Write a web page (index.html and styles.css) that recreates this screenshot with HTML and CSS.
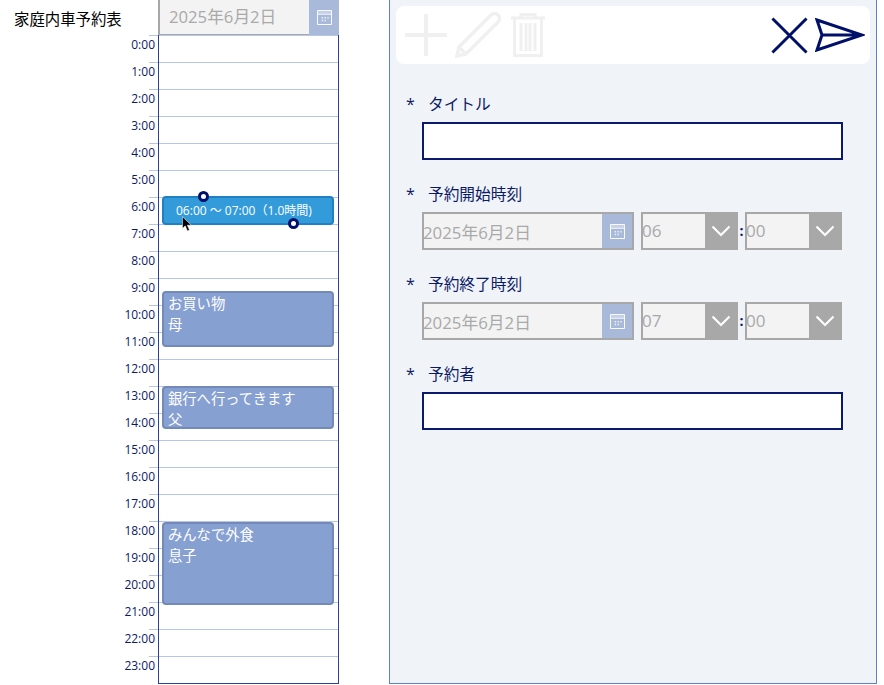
FILE: index.html
```html
<!DOCTYPE html>
<html lang="ja">
<head>
<meta charset="utf-8">
<title>家庭内車予約表</title>
<link rel="stylesheet" href="styles.css">
</head>
<body>
<div class="app">
  <section class="schedule">
    <header class="schedule-head">
      <h1 class="app-title">家庭内車予約表</h1>
      <div class="date-picker date-picker-top">
        <span class="date-text">2025年6月2日</span>
        <span class="cal-btn"><svg class="cal-icon" viewBox="0 0 16 16"><path fill="none" stroke="#fff" d="M.5.5h15v15H.5zM.5 4.500h15"/><path fill="#fff" d="M1 1h14v3H1z" opacity=".35"/><path fill="#fff" d="M5 7.500h1.500V9H5zM8 7.500h1.500V9H8zM11 7.500h1.500V9H11zM5 10.500h1.500V12H5zM8 10.500h1.500V12H8z" opacity=".8"/></svg></span>
      </div>
    </header>
    <div class="timeline">
      <div class="hour"><span class="time">0:00</span></div>
      <div class="hour"><span class="time">1:00</span></div>
      <div class="hour"><span class="time">2:00</span></div>
      <div class="hour"><span class="time">3:00</span></div>
      <div class="hour"><span class="time">4:00</span></div>
      <div class="hour"><span class="time">5:00</span></div>
      <div class="hour"><span class="time">6:00</span></div>
      <div class="hour"><span class="time">7:00</span></div>
      <div class="hour"><span class="time">8:00</span></div>
      <div class="hour"><span class="time">9:00</span></div>
      <div class="hour"><span class="time">10:00</span></div>
      <div class="hour"><span class="time">11:00</span></div>
      <div class="hour"><span class="time">12:00</span></div>
      <div class="hour"><span class="time">13:00</span></div>
      <div class="hour"><span class="time">14:00</span></div>
      <div class="hour"><span class="time">15:00</span></div>
      <div class="hour"><span class="time">16:00</span></div>
      <div class="hour"><span class="time">17:00</span></div>
      <div class="hour"><span class="time">18:00</span></div>
      <div class="hour"><span class="time">19:00</span></div>
      <div class="hour"><span class="time">20:00</span></div>
      <div class="hour"><span class="time">21:00</span></div>
      <div class="hour"><span class="time">22:00</span></div>
      <div class="hour"><span class="time">23:00</span></div>
      <div class="plot">
        <div class="event event-selected">06:00 ～ 07:00（1.0時間)
          <span class="handle handle-top"></span>
          <span class="handle handle-bottom"></span>
        </div>
        <div class="event event-shop"><span>お買い物</span><span>母</span></div>
        <div class="event event-bank"><span>銀行へ行ってきます</span><span>父</span></div>
        <div class="event event-dinner"><span>みんなで外食</span><span>息子</span></div>
        <svg class="cursor" viewBox="0 0 12 17"><path d="M.5.5v13l3-3 2.400 5.500 2.300-1-2.400-5.200h4.400z" fill="#000" stroke="#fff" stroke-width=".6"/></svg>
      </div>
    </div>
  </section>

  <section class="panel">
    <div class="toolbar">
      <div class="tool-group">
        <svg class="tool" viewBox="0 0 44 44"><path d="M22 1v42M1 22h42" fill="none" stroke="#f0f0f0" stroke-width="4"/></svg>
        <svg class="tool tool-pencil" viewBox="0 0 46 46"><path d="M2 44l2-9L36 3c2-2 5-2 7 0s2 5 0 7L11 42zM4 35l7 7" fill="none" stroke="#f0f0f0" stroke-width="3.500"/></svg>
        <svg class="tool tool-trash" viewBox="0 0 34 44"><path d="M0 5h34M10 5V1.500h14V5M3.500 5v37.500h27V5M10 10v28M15 10v28M19 10v28M24 10v28" fill="none" stroke="#f0f0f0" stroke-width="3"/></svg>
      </div>
      <div class="tool-group tool-group-right">
        <svg class="action-x" viewBox="0 0 38 38"><path d="M1.500 1.500l35 35M36.500 1.500l-35 35" fill="none" stroke="#00106a" stroke-width="3"/></svg>
        <svg class="action-send" viewBox="0 0 50 34"><path d="M2 2l45 15-45 15 5-15zM7 17h40" fill="none" stroke="#00106a" stroke-width="3"/></svg>
      </div>
    </div>

    <form class="form">
      <div class="field">
        <div class="field-label"><span class="req">*</span><span>タイトル</span></div>
        <div class="text-input"></div>
      </div>
      <div class="field">
        <div class="field-label"><span class="req">*</span><span>予約開始時刻</span></div>
        <div class="dt-row">
          <div class="date-picker date-picker-form">
            <span class="date-text">2025年6月2日</span>
            <span class="cal-btn"><svg class="cal-icon" viewBox="0 0 16 16"><path fill="none" stroke="#fff" d="M.5.5h15v15H.5zM.5 4.500h15"/><path fill="#fff" d="M1 1h14v3H1z" opacity=".35"/><path fill="#fff" d="M5 7.500h1.500V9H5zM8 7.500h1.500V9H8zM11 7.500h1.500V9H11zM5 10.500h1.500V12H5zM8 10.500h1.500V12H8z" opacity=".8"/></svg></span>
          </div>
          <div class="select"><span class="select-val">06</span><span class="select-btn"><svg class="chev" viewBox="0 0 20 12"><path d="M1.500 1.500L10 10l8.500-8.500" fill="none" stroke="#fff" stroke-width="2.200"/></svg></span></div>
          <span class="colon">:</span>
          <div class="select"><span class="select-val">00</span><span class="select-btn"><svg class="chev" viewBox="0 0 20 12"><path d="M1.500 1.500L10 10l8.500-8.500" fill="none" stroke="#fff" stroke-width="2.200"/></svg></span></div>
        </div>
      </div>
      <div class="field">
        <div class="field-label"><span class="req">*</span><span>予約終了時刻</span></div>
        <div class="dt-row">
          <div class="date-picker date-picker-form">
            <span class="date-text">2025年6月2日</span>
            <span class="cal-btn"><svg class="cal-icon" viewBox="0 0 16 16"><path fill="none" stroke="#fff" d="M.5.5h15v15H.5zM.5 4.500h15"/><path fill="#fff" d="M1 1h14v3H1z" opacity=".35"/><path fill="#fff" d="M5 7.500h1.500V9H5zM8 7.500h1.500V9H8zM11 7.500h1.500V9H11zM5 10.500h1.500V12H5zM8 10.500h1.500V12H8z" opacity=".8"/></svg></span>
          </div>
          <div class="select"><span class="select-val">07</span><span class="select-btn"><svg class="chev" viewBox="0 0 20 12"><path d="M1.500 1.500L10 10l8.500-8.500" fill="none" stroke="#fff" stroke-width="2.200"/></svg></span></div>
          <span class="colon">:</span>
          <div class="select"><span class="select-val">00</span><span class="select-btn"><svg class="chev" viewBox="0 0 20 12"><path d="M1.500 1.500L10 10l8.500-8.500" fill="none" stroke="#fff" stroke-width="2.200"/></svg></span></div>
        </div>
      </div>
      <div class="field">
        <div class="field-label"><span class="req">*</span><span>予約者</span></div>
        <div class="text-input"></div>
      </div>
    </form>
  </section>
</div>
</body>
</html>
```

FILE: styles.css
```css
* { box-sizing: border-box; }
html, body { margin: 0; padding: 0; background: #fff; }
body { font-family: "Open Sans", "Noto Sans CJK JP", sans-serif; overflow: hidden; }
.app { display: flex; width: 884px; height: 685px; }

/* left column */
.schedule { width: 339px; flex: none; }
.schedule-head { display: flex; align-items: center; height: 35px; }
.app-title { width: 158px; margin: 0; padding-left: 14px; font-size: 15.4px; font-weight: 400; color: #000; font-family: "Noto Sans CJK JP", sans-serif; }
.date-picker { display: flex; background: #f3f3f3; border: 2px solid #a8a8a8; }
.date-picker-top { width: 181px; height: 36px; border-width: 0 0 2px 2px; }
.date-text { flex: 1; color: #a9a9a9; font-size: 16.7px; line-height: 32px; white-space: nowrap; font-family: "Open Sans", "Noto Sans CJK JP", sans-serif; }
.date-picker-top .date-text { padding-left: 9px; line-height: 33px; }
.cal-btn { width: 30px; flex: none; display: flex; align-items: center; justify-content: center; background: #a8b9da; }
.date-picker-top .cal-btn { margin-bottom: -2px; }
.cal-icon { width: 15px; height: 15px; }

.timeline { position: relative; padding-left: 149px; height: 649px; }
.hour { height: 27px; width: 190px; border-top: 1px solid #b7c6e6; }
.time { display: block; width: 55px; margin-left: -49px; text-align: right; font-size: 12px; line-height: 17px; color: #0b1a66; }

.plot { position: absolute; left: 158px; top: 0; width: 181px; height: 649px; border: 1px solid #2c3f9a; border-top: 0; }
.event { position: absolute; left: 3px; width: 172px; display: flex; flex-direction: column; padding: 0 0 0 4px; background: #87a0d2; border: 2px solid #7389b8; border-radius: 4px; color: #fff; font-size: 14.3px; line-height: 21px; font-family: "Open Sans", "Noto Sans CJK JP", sans-serif; overflow: visible; }
.event-selected { top: 161px; height: 29px; background: #349bdb; border: 2px solid #1f80c4; font-size: 12px; line-height: 26px; padding-left: 12px; display: block; white-space: nowrap; }
.event-shop { top: 256px; height: 56px; }
.event-bank { top: 351px; height: 43px; overflow: hidden; }
.event-dinner { top: 487px; height: 83px; }
.handle { position: absolute; width: 11px; height: 11px; background: #fff; border: 3px solid #00106a; border-radius: 50%; }
.handle-top { left: 34px; top: -7px; }
.handle-bottom { left: 124px; top: 20px; }
.cursor { position: absolute; left: 23px; top: 181px; width: 11px; height: 16px; }

/* right panel */
.panel { width: 488px; height: 685px; margin: -1px 0 0 50px; flex: none; background: #f0f3f8; border: 1px solid #5f7fc6; padding: 6px 6px 0; }
.toolbar { display: flex; justify-content: space-between; align-items: center; height: 58px; background: #fff; border-radius: 8px; padding: 0 5px 0 8px; }
.tool-group { display: flex; align-items: center; gap: 7px; }
.tool-group-right { gap: 7px; }
.tool { width: 44px; height: 44px; }
.tool-pencil { width: 46px; height: 46px; }
.tool-trash { width: 34px; margin-left: 3px; }
.action-x { width: 37px; height: 37px; }
.action-send { width: 50px; height: 34px; }

.form { padding: 30px 0 0 10px; display: flex; flex-direction: column; gap: 24px; color: #0b1a66; }
.field { display: flex; flex-direction: column; }
.field-label { display: flex; height: 20px; font-size: 15.7px; line-height: 20px; font-family: "Noto Sans CJK JP", sans-serif; margin-bottom: 8px; }
.req { width: 22px; flex: none; font-family: "Open Sans", sans-serif; font-size: 16px; }
.text-input { margin-left: 16px; width: 421px; height: 38px; background: #fff; border: 2px solid #0a1a6e; }
.dt-row { display: flex; align-items: center; margin-left: 16px; width: 421px; }
.date-picker-form { width: 212px; height: 38px; }
.date-picker-form .date-text { font-size: 16.8px; line-height: 38px; margin-left: -1px; }
.select { display: flex; width: 97px; height: 38px; margin-left: 7px; background: #f3f3f3; border: 2px solid #a8a8a8; }
.select-val { flex: 1; color: #a9a9a9; font-size: 17px; line-height: 34px; margin-left: -1px; }
.select-btn { width: 31px; flex: none; display: flex; align-items: center; justify-content: center; background: #a8a8a8; }
.chev { width: 20px; height: 12px; }
.colon { width: 7px; margin-right: -7px; text-align: center; font-size: 14px; font-weight: 700; color: #0b1a66; line-height: 38px; }
```
